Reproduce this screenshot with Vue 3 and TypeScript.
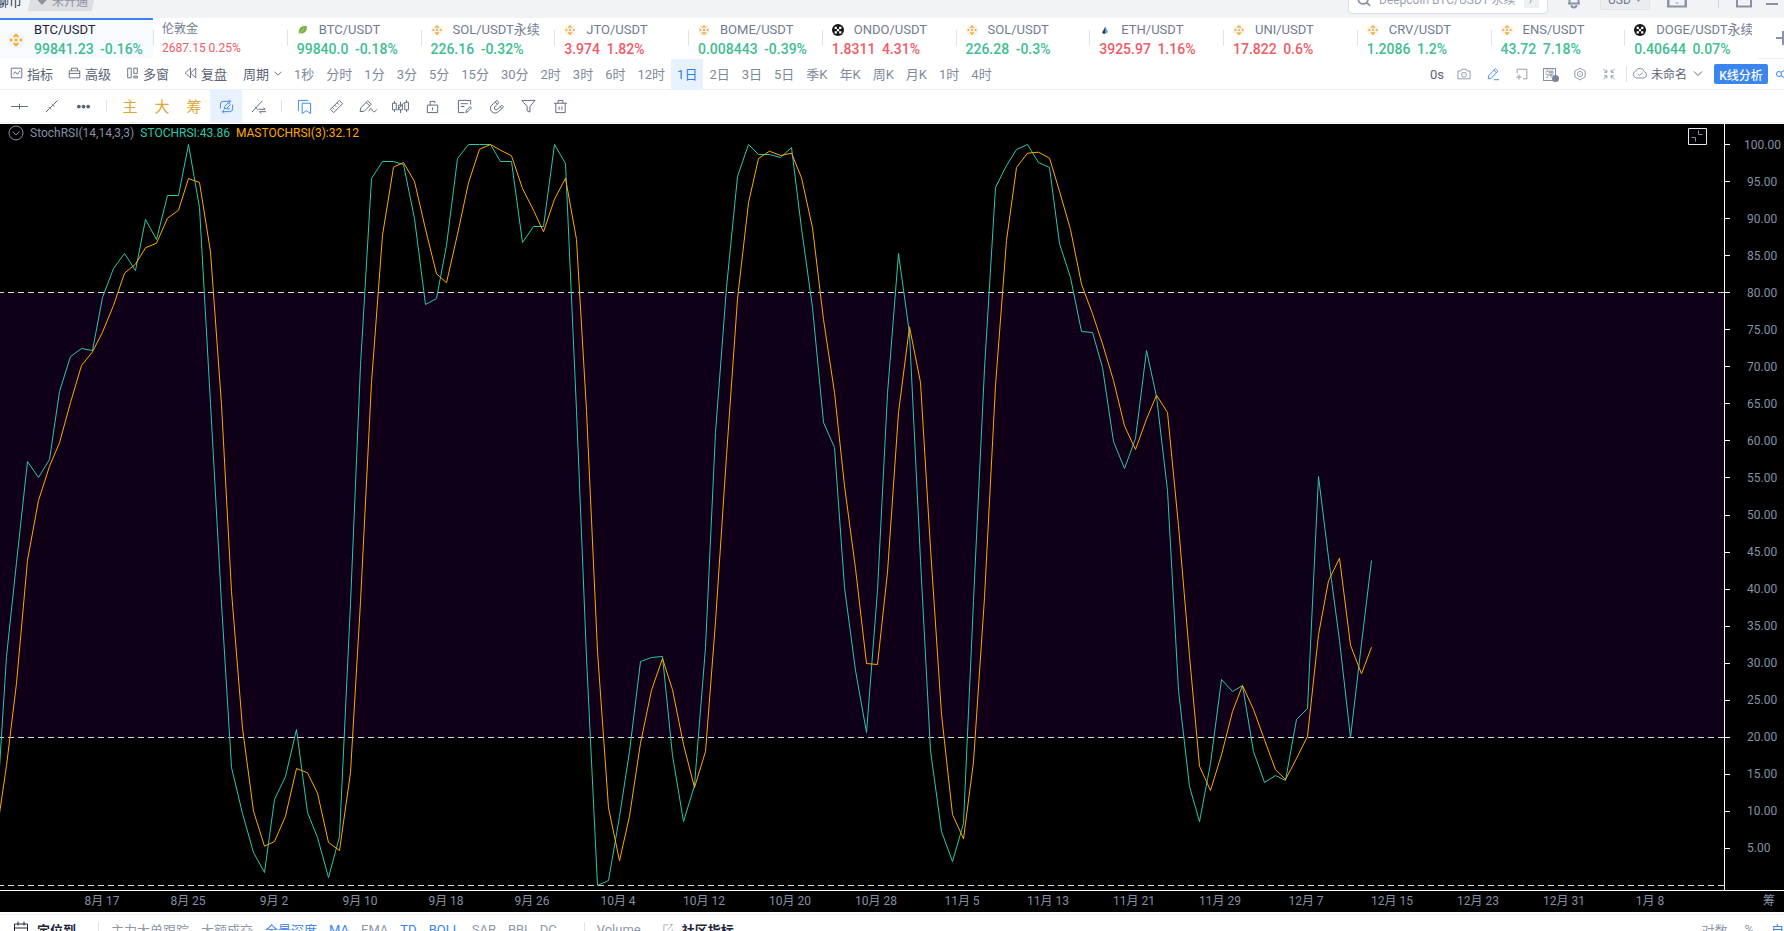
<script setup lang="ts">
import { computed, ref } from 'vue'

interface Ticker {
  coin: 'bnb' | 'leaf' | 'okx' | 'drop' | ''
  name: string
  price: string
  change: string
  up: boolean
}

const tickers: Ticker[] = [
  { coin: 'bnb', name: 'BTC/USDT', price: '99841.23', change: '-0.16%', up: false },
  { coin: '', name: '伦敦金', price: '2687.15', change: '0.25%', up: true },
  { coin: 'leaf', name: 'BTC/USDT', price: '99840.0', change: '-0.18%', up: false },
  { coin: 'bnb', name: 'SOL/USDT永续', price: '226.16', change: '-0.32%', up: false },
  { coin: 'bnb', name: 'JTO/USDT', price: '3.974', change: '1.82%', up: true },
  { coin: 'bnb', name: 'BOME/USDT', price: '0.008443', change: '-0.39%', up: false },
  { coin: 'okx', name: 'ONDO/USDT', price: '1.8311', change: '4.31%', up: true },
  { coin: 'bnb', name: 'SOL/USDT', price: '226.28', change: '-0.3%', up: false },
  { coin: 'drop', name: 'ETH/USDT', price: '3925.97', change: '1.16%', up: true },
  { coin: 'bnb', name: 'UNI/USDT', price: '17.822', change: '0.6%', up: true },
  { coin: 'bnb', name: 'CRV/USDT', price: '1.2086', change: '1.2%', up: false },
  { coin: 'bnb', name: 'ENS/USDT', price: '43.72', change: '7.18%', up: false },
  { coin: 'okx', name: 'DOGE/USDT永续', price: '0.40644', change: '0.07%', up: false },
]

const icons: Record<string, string> = {
  indicator: 'M2 2.5h12v11H2z M4.5 9.5l2-3 2.5 3 3-4',
  advanced: 'M2 5.5h12v8H2z M2 8.5h12 M4.5 5.5v-3h7v3',
  multi: 'M2.5 2.5h4v11h-4z M9.5 2.5h4v6h-4z M9.5 11.5h4v2h-4z',
  replay: 'M8 2.5v11L2 8z M14 2.5v11L8 8z',
  camera: 'M1 4.5h3.5l1-2h5l1 2H15v9H1z M8 6a2.8 2.8 0 1 0 0 5.6A2.8 2.8 0 0 0 8 6z M8 8.3v1',
  pen: 'M3 10l7.5-8 3 2.8-7.5 8-3.5.7z M9 3.8l3 2.7 M9 14.5h6',
  newpane: 'M2.5 7V2.5h11v11H9 M1.5 11.5h6 M4.5 8.5v6',
  hexagon: 'M8 1.2l5.9 3.4v6.8L8 14.8l-5.9-3.4V4.6z M8 5a3 3 0 1 0 0 6 3 3 0 0 0 0-6z M8 7.2v1.6',
  shrink: 'M1.5 2l4 4 M5.5 3v3h-3 M14.5 2l-4 4 M10.5 3v3h3 M1.5 14l4-4 M5.5 13v-3h-3 M14.5 14l-4-4 M10.5 13v-3h3',
  cloud: 'M4.5 13a3.6 3.6 0 0 1-.6-7 4.4 4.4 0 0 1 8.3.6 3.3 3.3 0 0 1-.4 6.4z M5.8 8.6l1.800 1.900 3-3',
  share: 'M4 5.500a2.500 2.500 0 1 0 0 5 2.500 2.500 0 0 0 0-5z M6 6.500l6-4 M6 9.500l6 4 M12 .500h4v4h-4z M12 11.500h4v4h-4z',
  hline: 'M-1 8h18 M8 5v6',
  trend: 'M2 14l4-4 M10 6l4.500-4.500 M5 8.500l2.500 2.500 M8.500 5.500L11 8 M6.500 9.500l3-3',
  syncpen: 'M12 2.500H4.500a3 3 0 0 0-3 3V10 M4 13.500h7.500a3 3 0 0 0 3-3V6 M10.500.5l2 2-2 2 M5.500 11.500l-2 2 2 2 M5.500 10.500l.5-2.500L10 4l2 2-4 4z M8.500 10.500h3',
  trendswap: 'M1 14L12 2 M4.500 8.500l3 3 M8 11h7l-2-2 M16 13.500H9l2 2',
  bookmark: 'M5.500 4.500h9v11l-4.500-3-4.500 3z M1.500 13V1.500H12',
  ruler: 'M1.500 11L11 1.500 14.500 5 5 14.500z M8.500 4l2 2 M6 6.500l2 2 M3.500 9l2 2',
  penwave: 'M-1 13.500l.8-4L7 2l4 3.500-7.500 7.500z M5.500 3.800l3.800 3.400 M8.500 13c1.500-4 3-3 3.500-1s2.500 2.500 5-1',
  candles: 'M-.5 4.500h4v7h-4z M1.500 2v2.500 M1.500 11.500V14 M6 6.500h4v5H6z M8 3v3.500 M8 11.500V15 M12.500 3.500h4v8h-4z M14.500 1v2.500 M14.500 11.500V14 M4.500 12L11.500 4',
  lock: 'M2.500 6.500h11v8h-11z M5.500 6.500v-4h5v2 M8 9v3',
  note: 'M14.500 6V1.500h-13v13H8 M4 5h7.500 M4 8h4 M9.500 14.500l.5-2.500 4-4 1.500 1.500-4 4z',
  magnet: 'M8.500 1.500L3 6.500a4.900 4.900 0 0 0 7 7L15.500 8.500l-2-2L9 11a1.900 1.900 0 0 1-2.800-2.800L10.500 4z M6.700 3.200l2 2.300 M11.700 8.200l2 2',
  filter: 'M1 1.500h14L9.500 8v6L6.500 12.500V8z',
  trash: 'M1 4.500h14 M5.500 4.500v-3h5v3 M3 4.500v10h10v-10 M6.500 8v3.500 M9.500 8v3.500',
  chevron: 'M4 6.500l4 4 4-4',
  plus: 'M1 8h14 M8 1v14',
  search: 'M7 1.500a5.500 5.500 0 1 0 0 11 5.500 5.500 0 0 0 0-11z M11 11l4 3.500',
  bell: 'M2 11.500h12 M3.500 11.500V6a4.500 4.500 0 0 1 9 0v5.500 M5.500 13a2.500 2.500 0 0 0 5 0',
  frame: 'M1 .5h14v14H1z M8 10.500v1',
  maximize: 'M1 .5h14v14H1z',
  calendar: 'M1.500 3h13v12h-13z M1.500 7h13 M5 .500v4 M11 .500v4',
  edit: 'M8 2.500H2.500v11h11V8 M7 9.500l7-7.500 M10.500 2H14',
}

const leadTools = [
  { icon: 'indicator', label: '指标' },
  { icon: 'advanced', label: '高级' },
  { icon: 'multi', label: '多窗' },
  { icon: 'replay', label: '复盘' },
]
const periods = ['1秒', '分时', '1分', '3分', '5分', '15分', '30分', '2时', '3时', '6时', '12时', '1日', '2日', '3日', '5日', '季K', '年K', '周K', '月K', '1时', '4时']
const period = ref('1日')
const activeTicker = ref(0)

const drawTools = [
  { id: 'bookmark', tone: 'blue', label: '书签' },
  { id: 'ruler', tone: '', label: '测量' },
  { id: 'penwave', tone: '', label: '画笔' },
  { id: 'candles', tone: '', label: 'K线' },
  { id: 'lock', tone: '', label: '锁定' },
  { id: 'note', tone: '', label: '备注' },
  { id: 'magnet', tone: '', label: '磁铁' },
  { id: 'filter', tone: '', label: '筛选' },
  { id: 'trash', tone: '', label: '删除' },
]

const footLeft = [
  { t: '主力大单跟踪', on: false }, { t: '大额成交', on: false }, { t: '全景深度', on: true },
  { t: 'MA', on: true }, { t: 'EMA', on: false }, { t: 'TD', on: true }, { t: 'BOLL', on: true },
  { t: 'SAR', on: false }, { t: 'BBI', on: false }, { t: 'DC', on: false },
]

const dates = ['8月 17', '8月 25', '9月 2', '9月 10', '9月 18', '9月 26', '10月 4', '10月 12', '10月 20', '10月 28', '11月 5', '11月 13', '11月 21', '11月 29', '12月 7', '12月 15', '12月 23', '12月 31', '1月 8']
const levels = Array.from({ length: 20 }, (_, i) => (100 - i * 5).toFixed(2))

// Daily StochRSI samples as plot heights: 144 is level 100, 885 is level 0.
const samples = [
  810, 830, 656, 562, 461, 477, 459, 391, 356, 348, 350, 297, 268, 253, 270, 219, 239, 195, 195,
  144, 207, 403, 603, 767, 813, 852, 872, 799, 776, 729, 812, 837, 877, 836, 603, 365, 178, 161, 161,
  164, 218, 304, 298, 245, 158, 144, 144, 144, 161, 161, 242, 226, 226, 144, 163, 410, 657, 885, 880,
  816, 751, 661, 657, 656, 755, 821, 785, 647, 432, 287, 176, 144, 154, 154, 157, 147, 228, 307, 422,
  447, 587, 670, 732, 590, 393, 253, 333, 560, 750, 831, 861, 823, 600, 368, 187, 165, 149, 144, 162,
  167, 243, 277, 331, 332, 367, 441, 468, 438, 350, 396, 490, 690, 786, 821, 763, 679, 691, 685, 751,
  782, 775, 780, 719, 708, 476, 557, 640, 737, 643, 560,
]
const firstDay = -19
const dayX = (i: number): number => Math.floor(188.9 + 10.754 * (i + firstDay)) + 0.5

const stochPath = computed(() => samples.map((y, i) => `${dayX(i)},${y + 0.5}`).join(' '))
const averagePath = computed(() =>
  samples
    .map((y, i) => {
      const a = samples[i - 1] ?? 860
      const b = samples[i - 2] ?? 880
      return `${dayX(i)},${((y + a + b) / 3 + 0.5).toFixed(1)}`
    })
    .join(' '),
)
</script>

<template>
  <div class="app">
    <header class="top">
      <div class="toprow">
        <span class="brand">聊币</span>
        <span class="badge">
          <svg viewBox="0 0 12 10" class="gem"><path d="M2.500 0h7L12 3.500 6 10 0 3.500z" /></svg>
          未开通
        </span>
        <div class="spacer"></div>
        <label class="search">
          <svg class="ic" viewBox="0 0 16 16"><path :d="icons.search" /></svg>
          <input type="text" aria-label="搜索" placeholder="Deepcoin BTC/USDT 永续" />
          <span class="key">/</span>
        </label>
        <button class="plain bell" aria-label="通知"><svg class="ic thick" viewBox="0 0 16 16"><path :d="icons.bell" /></svg></button>
        <span class="currency">
          <select aria-label="货币"><option>USD</option></select>
          <svg viewBox="0 0 8 5" class="caret"><path d="M0 0h8L4 5z" /></svg>
        </span>
        <button class="plain frame" aria-label="窗口"><svg class="ic thick" viewBox="0 0 16 16" preserveAspectRatio="none"><path :d="icons.frame" /></svg></button>
        <i class="vr"></i>
        <button class="plain max" aria-label="最大化"><svg class="ic thick" viewBox="0 0 16 16"><path :d="icons.maximize" /></svg></button>
        <button class="plain min" aria-label="最小化"><i></i></button>
      </div>
    </header>

    <nav class="tickers">
      <button
        v-for="(t, i) in tickers"
        :key="i"
        class="ticker"
        :class="{ active: i === activeTicker, small: !t.coin, first: i === 0 }"
        @click="activeTicker = i"
      >
        <span class="coin" v-if="t.coin">
          <svg v-if="t.coin === 'bnb'" viewBox="0 0 16 16">
            <circle cx="8" cy="8" r="8" fill="#f4f3f4" />
            <path d="M8 1.500l3 3-1.300 1.300L8 4.100 6.300 5.800 5 4.500z M8 14.500l3-3-1.300-1.300L8 11.900l-1.700-1.700L5 11.500z M1.500 8l1.700-1.700L4.900 8 3.200 9.700z M14.500 8l-1.700-1.700L11.100 8l1.700 1.700z M8 6.200L9.800 8 8 9.800 6.200 8z" fill="#f2a922" />
          </svg>
          <svg v-else-if="t.coin === 'leaf'" viewBox="-2 -2 20 20">
            <path d="M1 14C0 6 4 1 14 1c2 7-2 13-10 13z" fill="#7cb342" /><path d="M2 14L10 5" stroke="#d7ecb9" />
          </svg>
          <svg v-else-if="t.coin === 'okx'" viewBox="0 0 16 16">
            <circle cx="8" cy="8" r="8" fill="#14151a" />
            <path d="M3.500 3.500h3v3h-3z M9.500 3.500h3v3h-3z M6.500 6.500h3v3h-3z M3.500 9.500h3v3h-3z M9.500 9.500h3v3h-3z" fill="#fff" />
          </svg>
          <svg v-else viewBox="-3 -2 22 20">
            <path d="M9 1L3 12c0 3 4 4 6 2z" fill="#253a6b" /><path d="M9 3l4 7c1 4-3 5-5 4 3-3 2-6 1-11z" fill="#58a7e8" />
          </svg>
        </span>
        <span class="tname">{{ t.name }}</span>
        <span class="tprice" :class="t.up ? 'red' : 'green'">{{ t.price }} <b>{{ t.change }}</b></span>
      </button>
      <button class="add" aria-label="添加"><svg class="ic thick" viewBox="0 0 16 16"><path :d="icons.plus" /></svg></button>
    </nav>

    <div class="bar">
      <button v-for="l in leadTools" :key="l.label" class="lead">
        <svg class="ic" viewBox="0 0 16 16"><path :d="icons[l.icon]" /></svg>{{ l.label }}
      </button>
      <button class="lead cycle">周期<svg class="ic" viewBox="0 0 16 16"><path :d="icons.chevron" /></svg></button>
      <div class="periods">
        <button v-for="p in periods" :key="p" class="period" :class="{ on: p === period }" @click="period = p">{{ p }}</button>
      </div>
      <div class="spacer"></div>
      <div class="actions">
        <span class="delay">0s</span>
        <button class="act" aria-label="截图"><svg class="ic" viewBox="0 0 16 16"><path :d="icons.camera" /></svg></button>
        <button class="act blue" aria-label="绘图"><svg class="ic" viewBox="0 0 16 16"><path :d="icons.pen" /></svg></button>
        <button class="act" aria-label="新建窗格"><svg class="ic" viewBox="0 0 16 16"><path :d="icons.newpane" /></svg></button>
        <button class="act pop" aria-label="弹幕">
          <span class="popglyph">弹</span><i class="popdot"></i>
        </button>
        <button class="act" aria-label="设置"><svg class="ic" viewBox="0 0 16 16"><path :d="icons.hexagon" /></svg></button>
        <button class="act" aria-label="退出全屏"><svg class="ic" viewBox="0 0 16 16"><path :d="icons.shrink" /></svg></button>
      </div>
      <button class="saved">
        <svg class="ic cloud" viewBox="0 0 16 16"><path :d="icons.cloud" /></svg>未命名<svg class="ic" viewBox="0 0 16 16"><path :d="icons.chevron" /></svg>
      </button>
      <button class="analyse">K线分析</button>
      <button class="sharebtn" aria-label="分享"><svg class="ic" viewBox="0 0 16 16"><path :d="icons.share" /></svg></button>
    </div>

    <div class="tools">
      <button class="tool" aria-label="水平线"><svg class="ic" viewBox="0 0 16 16"><path :d="icons.hline" /></svg></button>
      <button class="tool" aria-label="趋势线"><svg class="ic" viewBox="0 0 16 16"><path :d="icons.trend" /></svg></button>
      <button class="tool" aria-label="更多"><svg class="dots" viewBox="0 0 16 16"><circle cx="3" cy="8" r="2" /><circle cx="8" cy="8" r="2" /><circle cx="13" cy="8" r="2" /></svg></button>
      <i class="sep"></i>
      <button class="tool gold">主</button>
      <button class="tool gold">大</button>
      <button class="tool gold">筹</button>
      <button class="tool on" aria-label="连续绘制"><svg class="ic" viewBox="0 0 16 16"><path :d="icons.syncpen" /></svg></button>
      <button class="tool" aria-label="切换"><svg class="ic" viewBox="0 0 16 16"><path :d="icons.trendswap" /></svg></button>
      <i class="sep"></i>
      <button v-for="d in drawTools" :key="d.id" class="tool" :class="d.tone" :aria-label="d.label">
        <svg class="ic" viewBox="0 0 16 16"><path :d="icons[d.id]" /></svg>
      </button>
    </div>

    <main class="chart">
      <div class="plot">
        <svg class="lines" viewBox="0 124 1724 766" preserveAspectRatio="none">
          <rect x="0" y="293" width="1724" height="445" class="band" />
          <path d="M0 292.500H1724 M0 737.500H1724 M0 885.500H1724" class="guide" />
          <polyline :points="stochPath" class="stoch" />
          <polyline :points="averagePath" class="average" />
        </svg>
        <div class="legend">
          <button class="fold" aria-label="收起"><svg viewBox="0 0 16 16"><circle cx="8" cy="8" r="7" /><path d="M4.500 6.500L8 10l3.500-3.500" /></svg></button>
          <span>StochRSI(14,14,3,3)</span>
          <span class="c-stoch">STOCHRSI:43.86</span>
          <span class="c-avg">MASTOCHRSI(3):32.12</span>
        </div>
        <button class="restore" aria-label="还原">
          <svg viewBox="0 0 19 17"><path d="M.5.5h18v16H.5z" /><path d="M10.500 2.500v4h4 M3.500 9.500h4v4" class="dim" /></svg>
        </button>
      </div>
      <div class="levels">
        <span v-for="l in levels" :key="l">{{ l }}</span>
      </div>
      <div class="dates">
        <span v-for="d in dates" :key="d">{{ d }}</span>
      </div>
      <div class="corner">筹</div>
    </main>

    <footer class="foot">
      <div class="footrow">
        <button class="strong"><svg class="ic" viewBox="0 0 16 16"><path :d="icons.calendar" /></svg>定位到</button>
        <i class="fsep"></i>
        <button v-for="f in footLeft" :key="f.t" :class="{ on: f.on }">{{ f.t }}</button>
        <i class="fsep far"></i>
        <button>Volume</button>
        <button class="strong comm"><svg class="ic" viewBox="0 0 16 16"><path :d="icons.edit" /></svg>社区指标</button>
        <div class="spacer"></div>
        <button class="wide">对数</button>
        <button class="wide">%</button>
        <button class="wide on auto">自动</button>
      </div>
    </footer>
  </div>
</template>

<style>
html,
body {
  margin: 0;
  background: #fff;
}
</style>

<style scoped>
.app {
  display: flex;
  flex-direction: column;
  height: 100vh;
  overflow: hidden;
  font-family: Roboto, 'Noto Sans CJK SC', sans-serif;
  font-size: 13px;
  color: #5a6478;
  background: #fff;
}
button,
input,
select {
  font: inherit;
  color: inherit;
  background: none;
  border: 0;
  padding: 0;
  margin: 0;
}
button {
  white-space: nowrap;
  cursor: pointer;
}
.spacer {
  flex: 1;
}
.ic {
  width: 16px;
  height: 16px;
  flex: none;
  fill: none;
  stroke: currentColor;
  stroke-width: 1;
  overflow: visible;
}
.thick {
  stroke-width: 2;
}

/* window header */
.top {
  height: 18px;
  flex: none;
  display: flex;
  align-items: flex-end;
  overflow: hidden;
  background: #f2f3f7;
}
.toprow {
  flex: 1;
  display: flex;
  align-items: center;
  height: 36px;
  padding-right: 6px;
}
.brand {
  margin-left: -4px;
  color: #2a3345;
}
.badge {
  display: flex;
  align-items: center;
  gap: 4px;
  height: 22px;
  margin-left: 6px;
  padding: 0 8px;
  font-size: 12px;
  color: #8c93a0;
  background: #dddfe3;
  clip-path: polygon(4px 0, 100% 0, calc(100% - 4px) 100%, 0 100%);
}
.gem {
  width: 12px;
  height: 12px;
  fill: #8c93a0;
}
.search {
  display: flex;
  align-items: center;
  box-sizing: border-box;
  width: 200px;
  height: 28px;
  padding: 0 8px;
  border: 1px solid #dcdfe6;
  border-radius: 4px;
  background: #fff;
  color: #8a93a6;
}
.search .ic {
  stroke-width: 2;
  width: 14px;
  height: 14px;
}
.search input {
  flex: 1;
  min-width: 0;
  margin-left: 8px;
  outline: 0;
  font-size: 12px;
}
.search input::placeholder {
  color: #9aa2b1;
  opacity: 1;
}
.key {
  width: 15px;
  line-height: 16px;
  text-align: center;
  background: #eff0f2;
  font-size: 11px;
}
.plain {
  display: flex;
  color: #8a93a6;
}
.bell {
  margin-left: 18px;
}
.currency {
  display: flex;
  align-items: center;
  box-sizing: border-box;
  width: 50px;
  height: 20px;
  margin-left: 18px;
  padding: 0 7px;
  border: 1px solid #e3e4e8;
  background: #ebecf0;
}
.currency select {
  appearance: none;
  width: 28px;
  color: #6e7788;
  font-size: 12px;
}
.caret {
  width: 7px;
  height: 4px;
  fill: #8a93a6;
}
.frame {
  margin-left: 17px;
}
.frame .ic {
  width: 20px;
}
.vr {
  width: 1px;
  height: 16px;
  margin: 0 17px 0 31px;
  background: #d5d8df;
}
.min {
  margin-left: 14px;
  height: 10px;
  align-items: flex-end;
}
.min i {
  width: 12px;
  height: 2px;
  background: #8a93a6;
}

/* tickers */
.tickers {
  display: grid;
  grid-template-columns: 153px repeat(12, minmax(0, 1fr)) 26px;
  height: 41px;
  flex: none;
}
.ticker {
  position: relative;
  display: grid;
  grid-template-columns: 12px minmax(0, 1fr);
  grid-template-rows: 18px 20px;
  column-gap: 10px;
  align-content: start;
  align-items: center;
  padding: 3px 6px 0 10px;
  text-align: left;
  overflow: hidden;
  color: #717c92;
}
.ticker + .ticker::before {
  content: '';
  position: absolute;
  left: 0;
  top: 12px;
  width: 1px;
  height: 16px;
  background: #dfe2e8;
}
.coin {
  display: flex;
}
.coin svg {
  width: 12px;
  height: 12px;
  fill: none;
}
.tname {
  height: 16px;
  line-height: 16px;
  overflow: hidden;
  white-space: nowrap;
}
.tprice {
  grid-column: 1 / 3;
  font-size: 14px;
  font-weight: 500;
}
.tprice b {
  font-weight: 500;
  margin-left: 3px;
}
.first {
  grid-template-columns: 16px minmax(0, 1fr);
  padding: 3px 6px 0 8px;
}
.first .coin {
  grid-row: 1 / 3;
}
.first .coin svg {
  width: 16px;
  height: 16px;
}
.first .tprice {
  grid-column: 2;
}
.active {
  color: #1d2638;
  background: #f7fafe;
  box-shadow: inset 0 2px #3b82ee;
}
.small {
  grid-template-columns: minmax(0, 1fr);
  grid-template-rows: 16px 22px;
  padding-left: 9px;
  padding-top: 3px;
}
.small .tname {
  font-size: 12px;
}
.small .tprice {
  grid-column: 1;
  font-size: 12px;
  font-weight: 400;
}
.small .tprice b {
  font-weight: 400;
  margin-left: 0;
}
.green {
  color: #40be90;
}
.red {
  color: #f25a66;
}
.add {
  display: flex;
  align-items: center;
  padding-left: 17px;
  overflow: hidden;
  color: #8a93a6;
  border-bottom: 1px solid #eceef2;
}

/* period bar */
.bar {
  display: flex;
  align-items: stretch;
  height: 30px;
  flex: none;
  padding-left: 9px;
  overflow: hidden;
  border-bottom: 1px solid #eff0f3;
}
.lead {
  display: flex;
  align-items: center;
  gap: 3px;
  margin-right: 13px;
  padding-bottom: 2px;
  width: 45px;
}
.lead .ic {
  width: 15px;
  height: 14px;
}
.cycle {
  width: 40px;
  gap: 1px;
  margin-left: 2px;
  margin-right: 5px;
}
.cycle .ic {
  width: 16px;
  height: 14px;
}
.periods {
  display: flex;
}
.period {
  padding: 0 6px 2px;
  color: #808a9d;
}
.period.on {
  color: #2f7de8;
  background: #e8f2fe;
}
.actions {
  display: flex;
  align-items: center;
  gap: 13px;
  padding-right: 9px;
}
.delay {
  margin-right: -1px;
}
.act {
  display: flex;
  color: #8790a2;
}
.act .ic {
  height: 14px;
}
.blue {
  color: #3b82ee;
}
.pop {
  position: relative;
  width: 16px;
}
.popglyph {
  width: 11px;
  border: 1px solid #8790a2;
  font-size: 9px;
  line-height: 11px;
}
.popdot {
  position: absolute;
  right: 0;
  bottom: -1px;
  width: 7px;
  height: 7px;
  border-radius: 50%;
  background: #7c8597;
}
.saved {
  display: flex;
  align-items: center;
  gap: 3px;
  padding: 0 8px 2px 6px;
  font-size: 12px;
  background: linear-gradient(#dfe2e8, #dfe2e8) 0 50% / 1px 16px no-repeat;
}
.cloud {
  color: #8790a2;
}
.analyse {
  align-self: center;
  width: 54px;
  height: 20px;
  border-radius: 2px;
  background: #3b85ee;
  color: #fff;
  font-size: 12px;
  font-weight: 500;
}
.sharebtn {
  display: flex;
  align-items: center;
  width: 9px;
  margin-left: 7px;
  color: #3b82ee;
}

/* drawing tools */
.tools {
  display: flex;
  height: 32px;
  flex: none;
  padding-left: 3px;
  border-bottom: 1px solid #eff0f3;
  margin-bottom: 1px;
}
.tool {
  display: flex;
  align-items: center;
  justify-content: center;
  width: 32px;
}
.tool .ic {
  width: 15px;
  height: 15px;
}
.dots {
  width: 15px;
  fill: #5a6478;
}
.gold {
  padding-bottom: 1px;
  color: #dfa736;
  font-size: 15px;
}
.tool.on {
  background: #e8f2fe;
  color: #3b82ee;
}
.tool.blue {
  color: #3b82ee;
}
.sep {
  align-self: center;
  width: 1px;
  height: 12px;
  margin: 0 7px;
  background: #dfe2e8;
}
.sep ~ .sep {
  margin-right: 6px;
}

/* chart */
.chart {
  flex: 1;
  min-height: 0;
  display: grid;
  grid-template-columns: minmax(0, 1fr) 59px;
  grid-template-rows: minmax(0, 1fr) 22px;
  background: #000;
  color: #8590a6;
  font-size: 12px;
}
.plot {
  position: relative;
  min-height: 0;
  border-right: 1px solid #fff;
}
.lines {
  position: absolute;
  inset: 0;
  width: 100%;
  height: 100%;
}
.band {
  fill: #0f0018;
}
.guide {
  fill: none;
  stroke: #d8d8d8;
  stroke-dasharray: 6 4;
  stroke-dashoffset: 2;
}
.stoch,
.average {
  fill: none;
  stroke-width: 1;
  vector-effect: non-scaling-stroke;
}
.stoch {
  stroke: #2cc7ab;
}
.average {
  stroke: #ffa800;
}
.legend {
  position: relative;
  display: flex;
  align-items: center;
  gap: 6px;
  height: 18px;
  padding-left: 8px;
}
.fold {
  display: flex;
}
.fold svg {
  width: 16px;
  height: 16px;
  fill: none;
  stroke: #8590a6;
}
.c-stoch {
  color: #2cc7ab;
}
.c-avg {
  color: #ffa800;
}
.restore {
  position: absolute;
  top: 4px;
  right: 17px;
  display: flex;
}
.restore svg {
  width: 19px;
  height: 17px;
  fill: none;
  stroke: #e6e8ec;
}
.restore .dim {
  stroke: #8590a6;
}
.levels {
  display: grid;
  grid-template-rows: repeat(20, minmax(0, 1fr));
  padding: 2px 0 23px;
}
.levels span {
  display: flex;
  align-items: center;
}
.levels span::before {
  content: '';
  width: 5px;
  height: 1px;
  margin-right: 17px;
  background: #fff;
}
.levels span:first-child::before {
  margin-right: 14px;
}
.dates {
  display: flex;
  align-items: center;
  padding: 0 32px 4px 59px;
  border-top: 1px solid #fff;
}
.dates span {
  flex: 1;
  text-align: center;
  white-space: nowrap;
}
.corner {
  display: flex;
  align-items: center;
  justify-content: flex-end;
  padding: 0 9px 4px 0;
  border-top: 1px solid #fff;
}

/* footer */
.foot {
  height: 19px;
  flex: none;
  overflow: hidden;
}
.footrow {
  display: flex;
  align-items: center;
  height: 28px;
  margin-top: 2px;
  padding-left: 13px;
  gap: 12px;
  border-top: 1px solid #eceef2;
  color: #8f98a8;
}
.footrow button {
  display: flex;
  align-items: center;
}
.footrow .on {
  color: #3b82ee;
}
.footrow .strong {
  gap: 8px;
  font-weight: 700;
  color: #1d2638;
}
.fsep {
  width: 1px;
  height: 14px;
  margin-left: 10px;
  background: #dfe2e8;
}
.far {
  margin-left: 15px;
}
.comm {
  margin-left: 9px;
}
.comm .ic {
  width: 12px;
  color: #8f98a8;
}
.wide {
  margin-left: 5px;
}
.auto {
  width: 13px;
  overflow: hidden;
}
</style>
